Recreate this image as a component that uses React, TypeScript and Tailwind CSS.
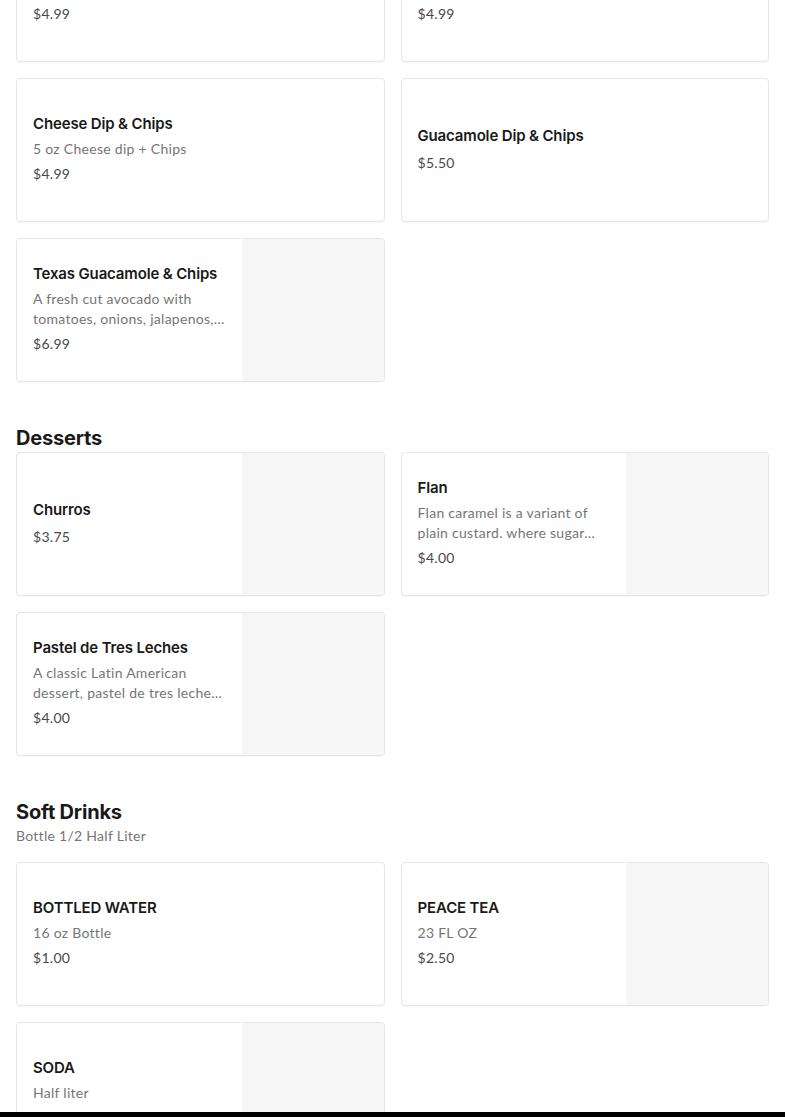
type Item = {
  name: string;
  desc?: string;
  price: string;
  image?: boolean;
};

type Section = {
  title?: string;
  subtitle?: string;
  items: Item[];
};

const sections: Section[] = [
  {
    items: [
      { name: "Bean Dip & Chips", desc: "5 oz Bean dip + Chips", price: "$4.99" },
      { name: "Salsa & Chips", desc: "8 oz Salsa + Chips", price: "$4.99" },
      { name: "Cheese Dip & Chips", desc: "5 oz Cheese dip + Chips", price: "$4.99" },
      { name: "Guacamole Dip & Chips", price: "$5.50" },
      {
        name: "Texas Guacamole & Chips",
        desc: "A fresh cut avocado with tomatoes, onions, jalapenos, cilantro and lime juice served with chips",
        price: "$6.99",
        image: true,
      },
    ],
  },
  {
    title: "Desserts",
    items: [
      { name: "Churros", price: "$3.75", image: true },
      {
        name: "Flan",
        desc: "Flan caramel is a variant of plain custard. where sugar syrup is cooked to caramel stage",
        price: "$4.00",
        image: true,
      },
      {
        name: "Pastel de Tres Leches",
        desc: "A classic Latin American dessert, pastel de tres leches is a sponge cake soaked in three kinds of milk",
        price: "$4.00",
        image: true,
      },
    ],
  },
  {
    title: "Soft Drinks",
    subtitle: "Bottle 1/2 Half Liter",
    items: [
      { name: "BOTTLED WATER", desc: "16 oz Bottle", price: "$1.00" },
      { name: "PEACE TEA", desc: "23 FL OZ", price: "$2.50", image: true },
      { name: "SODA", desc: "Half liter", price: "$2.50", image: true },
    ],
  },
];

function MenuCard({ item }: { item: Item }) {
  return (
    <div className="flex h-[144px] overflow-hidden rounded-[4px] border border-[#e6e6e6] bg-white shadow-[0_1px_1px_rgba(0,0,0,0.03)]">
      <div className="flex min-w-0 flex-1 flex-col justify-center pb-[4px] pl-4 pr-4">
        <p className="text-[15px] font-semibold leading-6 tracking-[-0.01em] text-[#191919]">
          {item.name}
        </p>
        {item.desc && (
          <p className="mt-[3px] line-clamp-2 font-['Lato',sans-serif] text-[14px] leading-5 tracking-[0.02em] text-[#767676]">
            {item.desc}
          </p>
        )}
        <p className="mt-[5px] font-['Lato',sans-serif] text-[14px] leading-5 tracking-[0.02em] text-[#494949]">
          {item.price}
        </p>
      </div>
      {item.image && <div className="h-full w-[142px] shrink-0 bg-[#f6f6f6]" />}
    </div>
  );
}

export default function App() {
  return (
    <div className="min-h-screen bg-white font-['Inter',sans-serif]">
      <div className="-mt-[82px] px-4 pb-10">
        {sections.map((section, i) => (
          <section key={i} className={i > 0 ? "mt-[41px]" : ""}>
            {section.title && (
              <div className={section.subtitle ? "mb-4" : ""}>
                <h2 className="pt-px text-[20px] font-bold leading-7 tracking-[-0.01em] text-[#191919]">
                  {section.title}
                </h2>
                {section.subtitle && (
                  <p className="font-['Lato',sans-serif] text-[14px] leading-5 tracking-[0.02em] text-[#767676]">
                    {section.subtitle}
                  </p>
                )}
              </div>
            )}
            <div className="grid grid-cols-2 gap-4">
              {section.items.map((item) => (
                <MenuCard key={item.name} item={item} />
              ))}
            </div>
          </section>
        ))}
      </div>
      <div className="fixed inset-x-0 bottom-0 h-[5px] bg-black" />
    </div>
  );
}
